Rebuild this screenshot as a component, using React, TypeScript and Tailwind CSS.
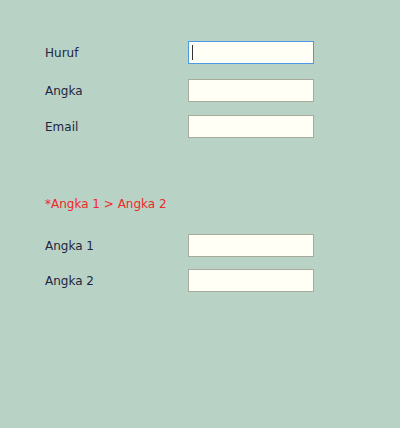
import React from "react";

function Row({ label, focused, mt }: { label: string; focused?: boolean; mt: string }) {
  return (
    <div className={`flex items-center ${mt}`}>
      <div className="w-[143px] text-[12px] leading-[14px] text-[#1e2640]">{label}</div>
      <div
        className={`relative w-[126px] h-[23px] bg-[#fffff6] border ${
          focused ? "border-[#4c9ae6]" : "border-[#a8aa9c]"
        }`}
      >
        {focused && <div className="absolute left-[3px] top-[3px] w-[1px] h-[15px] bg-[#333]" />}
      </div>
    </div>
  );
}

export default function App() {
  return (
    <div
      className="w-[400px] h-[428px] bg-[#b8d2c6] pl-[45px] pt-[41px]"
      style={{ fontFamily: '"DejaVu Sans", "Liberation Sans", sans-serif' }}
    >
      <Row label="Huruf" focused mt="mt-0" />
      <Row label="Angka" mt="mt-[15px]" />
      <Row label="Email" mt="mt-[13px]" />
      <div className="mt-[59px] text-[12px] leading-[14px] text-[#f02828]">*Angka 1 &gt; Angka 2</div>
      <Row label="Angka 1" mt="mt-[23px]" />
      <Row label="Angka 2" mt="mt-[12px]" />
    </div>
  );
}
